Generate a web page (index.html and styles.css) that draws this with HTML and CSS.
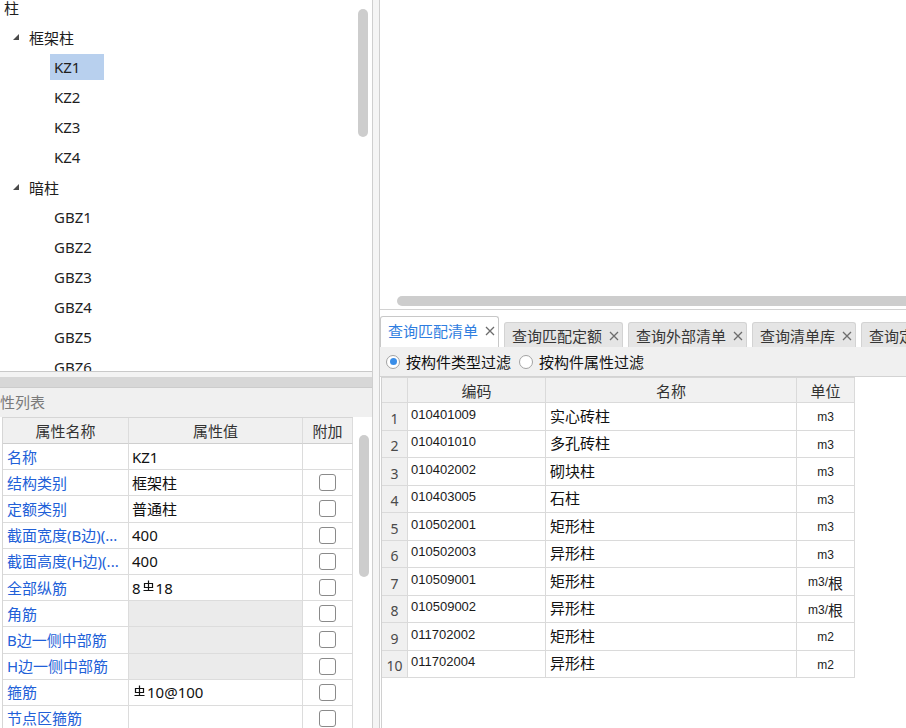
FILE: index.html
```html
<!DOCTYPE html>
<html lang="zh-CN">
<head>
<meta charset="utf-8">
<title>构件属性</title>
<link rel="stylesheet" href="styles.css">
</head>
<body>
<div class="app">
  <div class="left">
    <div class="tree-panel">
      <div class="tree">
        <div class="node l0">柱</div>
        <div class="node l1"><svg class="tri" viewBox="0 0 6 6"><polygon points="6,0 6,6 0,6"/></svg>框架柱</div>
        <div class="node l2"><span class="lbl sel">KZ1</span></div>
        <div class="node l2"><span class="lbl">KZ2</span></div>
        <div class="node l2"><span class="lbl">KZ3</span></div>
        <div class="node l2"><span class="lbl">KZ4</span></div>
        <div class="node l1"><svg class="tri" viewBox="0 0 6 6"><polygon points="6,0 6,6 0,6"/></svg>暗柱</div>
        <div class="node l2"><span class="lbl">GBZ1</span></div>
        <div class="node l2"><span class="lbl">GBZ2</span></div>
        <div class="node l2"><span class="lbl">GBZ3</span></div>
        <div class="node l2"><span class="lbl">GBZ4</span></div>
        <div class="node l2"><span class="lbl">GBZ5</span></div>
        <div class="node l2"><span class="lbl">GBZ6</span></div>
      </div>
      <div class="vtrack"><div class="thumb tree-thumb"></div></div>
    </div>
    <div class="split-h"></div>
    <div class="prop-title"><span>属性列表</span></div>
    <div class="prop-body">
      <div class="prop">
        <div class="c h">属性名称</div><div class="c h">属性值</div><div class="c h">附加</div>
        <div class="c name">名称</div><div class="c val">KZ1</div><div class="c chk"></div>
        <div class="c name">结构类别</div><div class="c val">框架柱</div><div class="c chk"><span class="box"></span></div>
        <div class="c name">定额类别</div><div class="c val">普通柱</div><div class="c chk"><span class="box"></span></div>
        <div class="c name">截面宽度(B边)(...</div><div class="c val">400</div><div class="c chk"><span class="box"></span></div>
        <div class="c name">截面高度(H边)(...</div><div class="c val">400</div><div class="c chk"><span class="box"></span></div>
        <div class="c name">全部纵筋</div><div class="c val">8<svg class="bar" viewBox="0 0 11 12"><path d="M5.5 0.5V11 M1.5 3.5H9.5V7.5H1.5Z M0.5 10.5H10.5"/></svg>18</div><div class="c chk"><span class="box"></span></div>
        <div class="c name">角筋</div><div class="c val gray"></div><div class="c chk"><span class="box"></span></div>
        <div class="c name">B边一侧中部筋</div><div class="c val gray"></div><div class="c chk"><span class="box"></span></div>
        <div class="c name">H边一侧中部筋</div><div class="c val gray"></div><div class="c chk"><span class="box"></span></div>
        <div class="c name">箍筋</div><div class="c val"><svg class="bar" viewBox="0 0 11 12"><path d="M5.5 0.5V11 M1.5 3.5H9.5V7.5H1.5Z M0.5 10.5H10.5"/></svg>10@100</div><div class="c chk"><span class="box"></span></div>
        <div class="c name">节点区箍筋</div><div class="c val"></div><div class="c chk"><span class="box"></span></div>
      </div>
      <div class="vtrack ptrack"><div class="thumb prop-thumb"></div></div>
    </div>
  </div>
  <div class="split-v"></div>
  <div class="right">
    <div class="view">
      <div class="hthumb"></div>
    </div>
    <div class="tabs">
      <div class="tab active"><span>查询匹配清单</span><svg class="x" viewBox="0 0 10 10"><path d="M1 1L9 9M9 1L1 9"/></svg></div>
      <div class="tab"><span>查询匹配定额</span><svg class="x" viewBox="0 0 10 10"><path d="M1 1L9 9M9 1L1 9"/></svg></div>
      <div class="tab"><span>查询外部清单</span><svg class="x" viewBox="0 0 10 10"><path d="M1 1L9 9M9 1L1 9"/></svg></div>
      <div class="tab"><span>查询清单库</span><svg class="x" viewBox="0 0 10 10"><path d="M1 1L9 9M9 1L1 9"/></svg></div>
      <div class="tab"><span>查询定额库</span><svg class="x" viewBox="0 0 10 10"><path d="M1 1L9 9M9 1L1 9"/></svg></div>
    </div>
    <div class="filters">
      <span class="radio on"></span><span class="rlabel">按构件类型过滤</span>
      <span class="radio second"></span><span class="rlabel">按构件属性过滤</span>
    </div>
    <div class="grid-wrap">
      <div class="grid">
        <div class="g gh rn"></div><div class="g gh">编码</div><div class="g gh">名称</div><div class="g gh">单位</div>
        <div class="g rn">1</div><div class="g code">010401009</div><div class="g nm">实心砖柱</div><div class="g unit">m3</div>
        <div class="g rn">2</div><div class="g code">010401010</div><div class="g nm">多孔砖柱</div><div class="g unit">m3</div>
        <div class="g rn">3</div><div class="g code">010402002</div><div class="g nm">砌块柱</div><div class="g unit">m3</div>
        <div class="g rn">4</div><div class="g code">010403005</div><div class="g nm">石柱</div><div class="g unit">m3</div>
        <div class="g rn">5</div><div class="g code">010502001</div><div class="g nm">矩形柱</div><div class="g unit">m3</div>
        <div class="g rn">6</div><div class="g code">010502003</div><div class="g nm">异形柱</div><div class="g unit">m3</div>
        <div class="g rn">7</div><div class="g code">010509001</div><div class="g nm">矩形柱</div><div class="g unit">m3/<span class="cj">根</span></div>
        <div class="g rn">8</div><div class="g code">010509002</div><div class="g nm">异形柱</div><div class="g unit">m3/<span class="cj">根</span></div>
        <div class="g rn">9</div><div class="g code">011702002</div><div class="g nm">矩形柱</div><div class="g unit">m2</div>
        <div class="g rn">10</div><div class="g code">011702004</div><div class="g nm">异形柱</div><div class="g unit">m2</div>
      </div>
    </div>
  </div>
</div>
</body>
</html>
```

FILE: styles.css
```css
* { box-sizing: border-box; }
html, body { margin: 0; padding: 0; }
body {
  width: 906px;
  height: 728px;
  overflow: hidden;
  background: #fff;
  font-family: "Noto Sans", "Noto Sans CJK SC", sans-serif;
  font-size: 15px;
  color: #1a1a1a;
}
.app { display: flex; height: 728px; }

/* ---------- left column ---------- */
.left {
  width: 373px;
  flex: none;
  display: flex;
  flex-direction: column;
  border-right: 1px solid #cfcfcf;
  min-height: 0;
}
.tree-panel {
  height: 372px;
  flex: none;
  display: flex;
  border-bottom: 1px solid #c9c9c9;
  overflow: hidden;
}
.tree { flex: 1; margin-top: -8px; }
.node {
  height: 30px;
  display: flex;
  align-items: center;
  white-space: nowrap;
  color: #1e1e1e;
}
.l0 { padding-left: 4px; }
.l1 { padding-left: 13px; }
.tri { width: 6px; height: 6px; margin-right: 10px; fill: #4a4a4a; }
.l2 { padding-left: 50px; }
.lbl {
  display: block;
  width: 54px;
  height: 26px;
  line-height: 26px;
  padding-left: 4px;
}
.sel { background: #b8d0ee; }

.vtrack { width: 16px; flex: none; }
.thumb { background: #cdcdcd; border-radius: 5px; width: 10px; }
.tree-thumb { margin: 9px 0 0 2px; height: 128px; }

.split-h {
  height: 16px;
  flex: none;
  border-top: 5px solid #f3f3f3;
  background: #d7d7d7;
  border-bottom: 1px solid #cccccc;
}
.prop-title {
  height: 29px;
  flex: none;
  line-height: 28px;
  background: #f0f0f0;
  color: #7a7a7a;
  white-space: nowrap;
  overflow: hidden;
}
.prop-title span { display: inline-block; margin-left: -15px; }

.prop-body { flex: 1; display: flex; min-height: 0; overflow: hidden; }
.prop {
  margin-left: 2px;
  width: 351px;
  flex: none;
  display: grid;
  grid-template-columns: 126px 174px 50px;
  grid-template-rows: 26px;
  grid-auto-rows: 26.2px;
  align-content: start;
  border-left: 1px solid #d6d6d6;
  border-top: 1px solid #d6d6d6;
}
.c {
  border-right: 1px solid #dcdcdc;
  border-bottom: 1px solid #dcdcdc;
  display: flex;
  align-items: center;
  white-space: nowrap;
  overflow: hidden;
  line-height: 20px;
}
.h {
  background: #f0f0f0;
  justify-content: center;
  color: #333;
  border-bottom-color: #cfcfcf;
}
.name { color: #2160d8; padding-left: 4px; }
.val { padding-left: 3px; color: #111; }
.gray { background: #ebebeb; }
.chk { justify-content: center; }
.box {
  width: 17px;
  height: 17px;
  border: 1px solid #8a8a8a;
  border-radius: 3px;
  background: #fff;
}
.bar {
  width: 11px;
  height: 12px;
  margin: 0 2px 3px 2px;
  fill: none;
  stroke: #111;
  stroke-width: 1.2;
}
.ptrack { width: 19px; }
.prop-thumb { margin: 18px 0 0 6px; height: 142px; }

.split-v { width: 6px; flex: none; background: #f5f5f5; }

/* ---------- right column ---------- */
.right {
  flex: 1;
  min-width: 0;
  border-left: 1px solid #cfcfcf;
  display: flex;
  flex-direction: column;
  overflow: hidden;
}
.view {
  height: 310px;
  flex: none;
  border-bottom: 1px solid #d2d2d2;
  display: flex;
  flex-direction: column;
  justify-content: flex-end;
  padding-bottom: 3px;
}
.hthumb {
  height: 10px;
  width: 540px;
  margin-left: 17px;
  background: #cdcdcd;
  border-radius: 5px;
  flex: none;
}

.tabs {
  height: 37px;
  flex: none;
  display: flex;
  align-items: flex-end;
  gap: 5px;
  overflow: hidden;
  white-space: nowrap;
}
.tab {
  flex: none;
  height: 25px;
  display: flex;
  align-items: center;
  gap: 7px;
  padding: 1px 3px 0 7px;
  border: 1px solid #d3d3d3;
  border-bottom: none;
  border-radius: 3px 3px 0 0;
  background: #e5e5e5;
  color: #363636;
}
.tab.active {
  height: 31px;
  padding-top: 0;
  padding-bottom: 3px;
  background: #fff;
  color: #2f7ee0;
  border-color: #c8c8c8;
}
.x { width: 10px; height: 10px; fill: none; stroke: #6c6c6c; stroke-width: 1.3; }

.filters {
  height: 30px;
  flex: none;
  display: flex;
  align-items: center;
  padding-left: 6px;
  background: #f0f0f0;
  border-bottom: 1px solid #d3d3d3;
  white-space: nowrap;
}
.radio {
  width: 14px;
  height: 14px;
  border-radius: 50%;
  border: 1px solid #a3a3a3;
  background: #fff;
  display: grid;
  place-items: center;
  margin-right: 6px;
  flex: none;
}
.radio.on::after {
  content: "";
  width: 7px;
  height: 7px;
  border-radius: 50%;
  background: #3a8ee8;
}
.radio.second { margin-left: 8px; }
.rlabel { color: #111; }

.grid-wrap {
  flex: 1;
  margin-left: 1px;
  border-left: 1px solid #d0d0d0;
}
.grid {
  width: 473px;
  display: grid;
  grid-template-columns: 26px 138px 251px 58px;
  grid-template-rows: 25px;
  grid-auto-rows: 27.5px;
  border-top: 1px solid #d6d6d6;
}
.g {
  border-right: 1px solid #dadada;
  border-bottom: 1px solid #dadada;
  display: flex;
  align-items: center;
  white-space: nowrap;
  overflow: hidden;
}
.gh { background: #f1f1f1; justify-content: center; color: #333; }
.rn {
  background: #f0f0f0;
  justify-content: center;
  color: #4a4a4a;
  font-size: 14px;
  padding-top: 4px;
}
.code {
  font-family: "Liberation Sans", sans-serif;
  font-size: 13px;
  color: #1a1a1a;
  padding-left: 3px;
  padding-bottom: 4px;
}
.nm { padding-left: 4px; color: #111; padding-bottom: 2px; }
.unit {
  justify-content: center;
  font-family: "Liberation Sans", "Noto Sans CJK SC", sans-serif;
  font-size: 12px;
  color: #222;
  padding-top: 2px;
}
.cj { font-family: "Noto Sans CJK SC", sans-serif; font-size: 15px; }
```
